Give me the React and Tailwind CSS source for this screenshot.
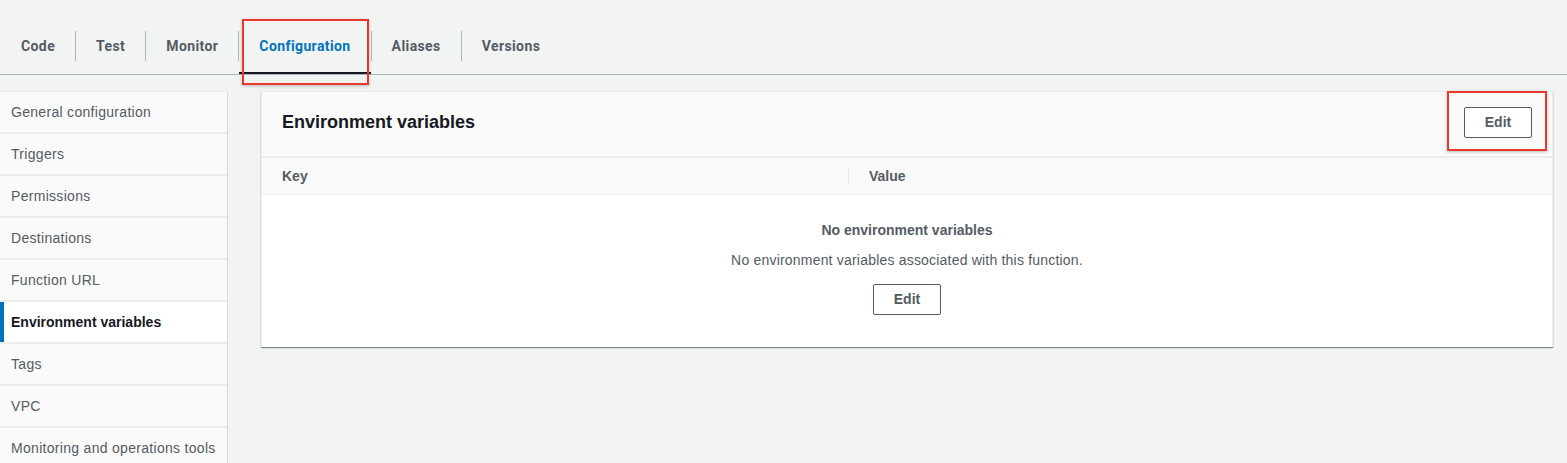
import React from "react";

const tabs = ["Code", "Test", "Monitor", "Configuration", "Aliases", "Versions"];
const side = [
  "General configuration",
  "Triggers",
  "Permissions",
  "Destinations",
  "Function URL",
  "Environment variables",
  "Tags",
  "VPC",
  "Monitoring and operations tools",
];

export default function App() {
  return (
    <div
      className="w-[1567px] h-[463px] overflow-hidden bg-[#f2f3f3] text-[14px]"
      style={{ fontFamily: "'Liberation Sans', Arial, sans-serif" }}
    >
      {/* Tabs */}
      <div
        className="relative flex items-center h-[75px] pt-[18px] pl-px border-b border-[#aab7b8] tracking-[0.4px]"
        style={{ fontFamily: "Roboto, 'Liberation Sans', sans-serif" }}
      >
        {tabs.map((t, i) => (
          <React.Fragment key={t}>
            {i > 0 && <div className="w-px h-[30px] bg-[#aab7b8]" />}
            <div
              className={
                "h-full flex items-center px-5 font-bold " +
                (t === "Configuration"
                  ? "text-[#0073bb] border-b-2 border-[#16191f] pt-[2px]"
                  : "text-[#545b64]")
              }
            >
              {t}
            </div>
          </React.Fragment>
        ))}
        <div className="absolute left-[242px] top-[19px] w-[127px] h-[66px] border-2 border-[#e8392c] shadow-[0_1px_3px_rgba(0,0,0,0.25)]" />
      </div>

      <div className="flex pt-4">
        {/* Sidebar */}
        <div className="w-[228px] h-[400px] flex flex-col gap-[2px] bg-[#eaeded] border-r border-[#d5dbdb] border-t border-t-[#eaeded]">
          {side.map((s) => {
            const active = s === "Environment variables";
            return (
              <div
                key={s}
                className={
                  "relative shrink-0 h-10 flex items-center pl-[11px] whitespace-nowrap " +
                  (active
                    ? "bg-white font-bold text-[#16191f]"
                    : "bg-[#fafafa] text-[#545b64] tracking-[0.3px]")
                }
              >
                {active && (
                  <div className="absolute left-0 top-0 bottom-0 w-1 bg-[#0073bb]" />
                )}
                {s}
              </div>
            );
          })}
        </div>

        {/* Main panel */}
        <div className="flex-1 ml-[33px] mr-[14px]">
          <div className="bg-white border border-[#eaeded] border-b-0 shadow-[0_1px_1px_0_rgba(0,28,36,0.5)]">
            <div className="relative h-[65px] flex items-center justify-between px-5 pb-[3px] bg-[#fafafa] border-b border-[#eaeded]">
              <div className="text-[18px] font-bold text-[#16191f]">
                Environment variables
              </div>
              <div className="w-[68px] h-[31px] flex items-center justify-center border border-[#545b64] rounded-[2px] bg-white font-bold text-[#545b64]">
                Edit
              </div>
              <div className="absolute right-[5px] top-[-1px] w-[100px] h-[60px] border-2 border-[#e8392c] shadow-[0_1px_3px_rgba(0,0,0,0.25)]" />
            </div>
            <div className="flex items-center h-[38px] bg-[#fafafa] border-t border-b border-[#eaeded] font-bold text-[#545b64]">
              <div className="w-[586px] pl-5">Key</div>
              <div className="w-px h-[18px] bg-[#eaeded]" />
              <div className="pl-5">Value</div>
            </div>
            <div className="flex flex-col items-center pt-[25px] pb-[32px] bg-white text-[#545b64]">
              <div className="font-bold leading-5">No environment variables</div>
              <div className="mt-[10px] leading-5 tracking-[0.2px]">
                No environment variables associated with this function.
              </div>
              <div className="mt-[14px] w-[68px] h-[31px] flex items-center justify-center border border-[#545b64] rounded-[2px] bg-white font-bold">
                Edit
              </div>
            </div>
          </div>
        </div>
      </div>
    </div>
  );
}
